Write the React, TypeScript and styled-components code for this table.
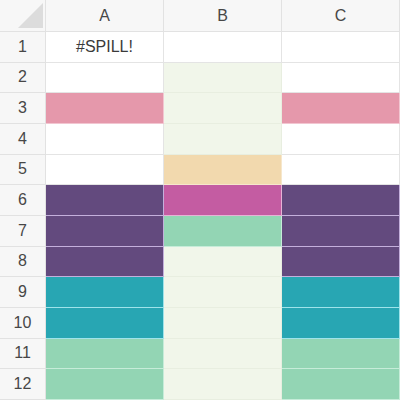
import React from "react";
import styled, { createGlobalStyle } from "styled-components";

const Global = createGlobalStyle`
  html, body { margin: 0; padding: 0; background: #ffffff; }
  body { font-family: "Liberation Sans", Arial, sans-serif; }
`;

const Sheet = styled.div`
  display: grid;
  grid-template-columns: 46px repeat(3, 118px);
  grid-template-rows: 32px repeat(12, 1fr);
  width: 400px;
  height: 400px;
  overflow: hidden;
`;

const HeaderCell = styled.div`
  display: flex;
  align-items: center;
  justify-content: center;
  background: #f7f7f7;
  border-right: 1px solid #e2e2e2;
  border-bottom: 1px solid #e2e2e2;
  color: #474747;
  font-size: 16px;
  box-sizing: border-box;
`;

const Corner = styled(HeaderCell)`
  position: relative;
`;

const CornerMark = styled.svg`
  position: absolute;
  right: 2px;
  bottom: 3px;
`;

const Cell = styled.div<{ $fill?: string; $line?: string }>`
  display: flex;
  align-items: center;
  justify-content: center;
  background: ${(p) => p.$fill ?? "#ffffff"};
  border-right: 1px solid ${(p) => p.$line ?? "#e4e4e4"};
  border-bottom: 1px solid ${(p) => p.$line ?? "#e4e4e4"};
  color: #3a3a3a;
  font-size: 16px;
  box-sizing: border-box;
`;

type Fill = { fill: string; line: string } | null;

const PINK = { fill: "#e598ab", line: "#f2c6d1" };
const PURPLE = { fill: "#634a7e", line: "#c4b0dc" };
const MAGENTA = { fill: "#c45ca2", line: "#e7b2d6" };
const TAN = { fill: "#f2d9ae", line: "#f6e7cc" };
const MINT = { fill: "#93d5b4", line: "#c6ecd9" };
const TEAL = { fill: "#28a6b3", line: "#9fe3ea" };
const PALE = { fill: "#f1f6ea", line: "#e8eee0" };

const rows: { a: Fill; b: Fill; c: Fill; text?: string }[] = [
  { a: null, b: null, c: null, text: "#SPILL!" },
  { a: null, b: PALE, c: null },
  { a: PINK, b: PALE, c: PINK },
  { a: null, b: PALE, c: null },
  { a: null, b: TAN, c: null },
  { a: PURPLE, b: MAGENTA, c: PURPLE },
  { a: PURPLE, b: MINT, c: PURPLE },
  { a: PURPLE, b: PALE, c: PURPLE },
  { a: TEAL, b: PALE, c: TEAL },
  { a: TEAL, b: PALE, c: TEAL },
  { a: MINT, b: PALE, c: MINT },
  { a: MINT, b: PALE, c: MINT },
];

export default function App() {
  return (
    <>
      <Global />
      <Sheet>
        <Corner>
          <CornerMark width="25" height="25" viewBox="0 0 25 25">
            <polygon points="0,25 25,25 25,0" fill="#dcdcdc" />
          </CornerMark>
        </Corner>
        <HeaderCell>A</HeaderCell>
        <HeaderCell>B</HeaderCell>
        <HeaderCell>C</HeaderCell>
        {rows.map((r, i) => (
          <React.Fragment key={i}>
            <HeaderCell>{i + 1}</HeaderCell>
            <Cell $fill={r.a?.fill} $line={r.a?.line}>
              {r.text}
            </Cell>
            <Cell $fill={r.b?.fill} $line={r.b?.line} />
            <Cell $fill={r.c?.fill} $line={r.c?.line} />
          </React.Fragment>
        ))}
      </Sheet>
    </>
  );
}
